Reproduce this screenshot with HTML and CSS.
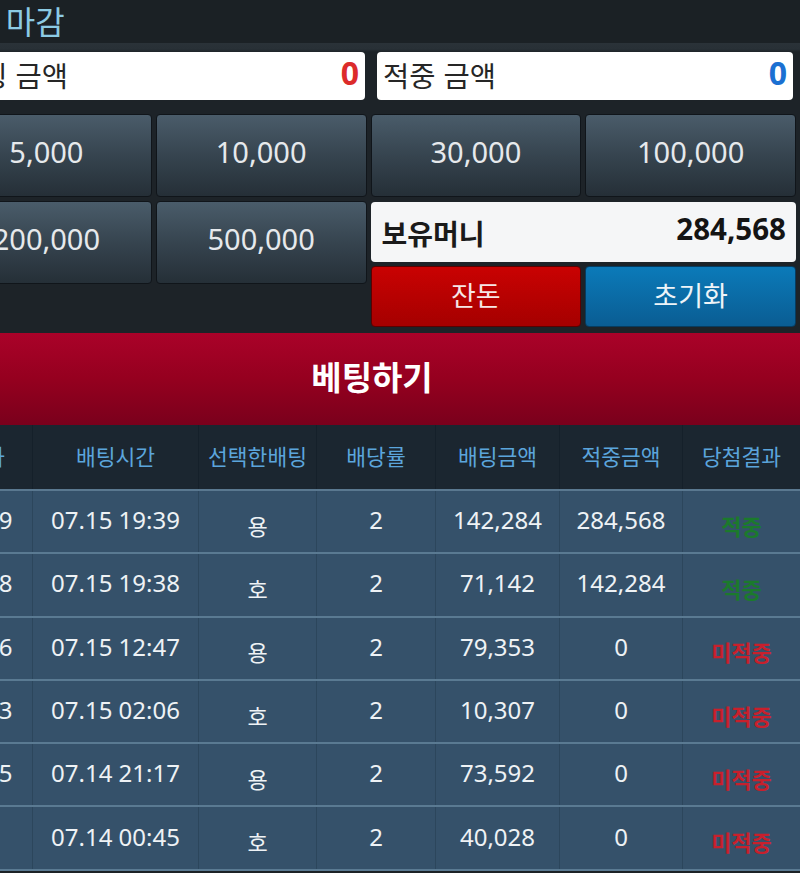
FILE: index.html
```html
<!DOCTYPE html>
<html lang="ko">
<head>
<meta charset="utf-8">
<title>베팅</title>
<link rel="stylesheet" href="styles.css">
</head>
<body>
<div class="page">
  <div class="topbar"><span class="title">회차 마감</span></div>
  <div class="panel">
    <div class="sums">
      <div class="sum"><span class="sum-label">베팅 금액</span><span class="sum-value red">0</span></div>
      <div class="sum"><span class="sum-label">적중 금액</span><span class="sum-value blue">0</span></div>
    </div>
    <div class="controls">
      <div class="chips-left">
        <button class="chip">5,000</button>
        <button class="chip">10,000</button>
        <button class="chip">200,000</button>
        <button class="chip">500,000</button>
      </div>
      <div class="chips-right">
        <button class="chip">30,000</button>
        <button class="chip">100,000</button>
        <div class="wallet"><span class="wallet-label">보유머니</span><span class="wallet-value">284,568</span></div>
        <button class="action change">잔돈</button>
        <button class="action reset">초기화</button>
      </div>
    </div>
  </div>
  <button class="bet">베팅하기</button>
  <div class="history">
    <div class="hrow head">
      <div class="cell">회차</div>
      <div class="cell">배팅시간</div>
      <div class="cell">선택한배팅</div>
      <div class="cell">배당률</div>
      <div class="cell">배팅금액</div>
      <div class="cell">적중금액</div>
      <div class="cell">당첨결과</div>
    </div>
    <div class="hrow">
      <div class="cell">1179</div><div class="cell">07.15 19:39</div><div class="cell kor">용</div><div class="cell">2</div><div class="cell">142,284</div><div class="cell">284,568</div><div class="cell res win">적중</div>
    </div>
    <div class="hrow">
      <div class="cell">1178</div><div class="cell">07.15 19:38</div><div class="cell kor">호</div><div class="cell">2</div><div class="cell">71,142</div><div class="cell">142,284</div><div class="cell res win">적중</div>
    </div>
    <div class="hrow">
      <div class="cell">1136</div><div class="cell">07.15 12:47</div><div class="cell kor">용</div><div class="cell">2</div><div class="cell">79,353</div><div class="cell">0</div><div class="cell res lose">미적중</div>
    </div>
    <div class="hrow">
      <div class="cell">1123</div><div class="cell">07.15 02:06</div><div class="cell kor">호</div><div class="cell">2</div><div class="cell">10,307</div><div class="cell">0</div><div class="cell res lose">미적중</div>
    </div>
    <div class="hrow">
      <div class="cell">1115</div><div class="cell">07.14 21:17</div><div class="cell kor">용</div><div class="cell">2</div><div class="cell">73,592</div><div class="cell">0</div><div class="cell res lose">미적중</div>
    </div>
    <div class="hrow">
      <div class="cell">4</div><div class="cell">07.14 00:45</div><div class="cell kor">호</div><div class="cell">2</div><div class="cell">40,028</div><div class="cell">0</div><div class="cell res lose">미적중</div>
    </div>
  </div>
</div>
</body>
</html>
```
FILE: styles.css
```css
html, body {
  margin: 0;
  padding: 0;
  background: #1c2226;
  overflow: hidden;
}
body {
  font-family: "Noto Sans", "Noto Sans CJK KR", sans-serif;
  width: 800px;
  height: 873px;
}
.page {
  width: 862px;
  margin-left: -62px;
}
.topbar {
  height: 43px;
  background: #1b2125;
  display: flex;
  align-items: center;
  padding-left: 0;
}
.title {
  font-family: "Noto Sans CJK KR", sans-serif;
  font-size: 32px;
  color: #8ccbe4;
  line-height: 1;
  margin-top: -4px;
}
.panel {
  background: linear-gradient(#2a3238 0, #283036 6px, #1d2328 9px, #1d2328 100%);
  padding: 9px 0 6px 0;
}
.sums {
  display: flex;
  gap: 12px;
  padding: 0 7px 0 11px;
}
.sum {
  flex: 1;
  height: 48px;
  background: #ffffff;
  border-radius: 4px;
  display: flex;
  align-items: center;
  justify-content: space-between;
  padding: 0 6px 0 6px;
  box-sizing: border-box;
}
.sum-label {
  font-family: "Noto Sans CJK KR", sans-serif;
  font-size: 28.5px;
  color: #262626;
  line-height: 1;
  margin-top: -2px;
}
.sum-value {
  font-size: 32px;
  font-weight: 700;
  line-height: 1;
  margin-top: -6px;
}
.red { color: #dc2b2b; }
.blue { color: #1b70d2; }
.controls {
  display: flex;
  gap: 4px;
  padding: 14px 4px 0 3px;
}
.chips-left, .chips-right {
  flex: 1;
  display: grid;
  grid-template-columns: 1fr 1fr;
  column-gap: 4px;
  row-gap: 4px;
  align-content: start;
}
.chips-left { grid-template-rows: 83px 83px; }
.chips-right { grid-template-rows: 83px 60px 61px; row-gap: 4.5px; }
button {
  font-family: inherit;
  margin: 0;
  cursor: pointer;
}
.chip {
  background: linear-gradient(#4a5c6a, #36444f 50%, #252f37);
  border: 1px solid #10151a;
  border-radius: 4px;
  color: #e6e9ec;
  font-size: 29px;
  padding: 0 0 9px 0;
}
.wallet {
  grid-column: 1 / 3;
  background: #f5f6f7;
  border-radius: 4px;
  display: flex;
  align-items: center;
  justify-content: space-between;
  padding: 0 10px 0 11px;
}
.wallet-label {
  font-family: "Noto Sans CJK KR", sans-serif;
  font-size: 28px;
  font-weight: 700;
  color: #1a1a1a;
  margin-top: 2px;
}
.wallet-value {
  font-size: 29.5px;
  font-weight: 700;
  color: #141414;
  margin-top: -6px;
}
.action {
  border-radius: 4px;
  font-family: "Noto Sans CJK KR", sans-serif;
  font-size: 27px;
  padding: 0 0 4px 0;
}
.change {
  background: linear-gradient(#c90202, #a50000);
  border: 1px solid #5c0000;
  color: #f6e6e6;
}
.reset {
  background: linear-gradient(#0b7ab9, #0a5d93);
  border: 1px solid #063c60;
  color: #eef4f8;
}
.bet {
  display: block;
  width: 100%;
  height: 92px;
  border: 0;
  background: linear-gradient(#aa0229, #95001f 50%, #7a001c);
  color: #ffffff;
  font-family: "Noto Sans CJK KR", sans-serif;
  font-size: 33px;
  font-weight: 700;
  padding: 0 0 6px 6px;
}
.history {
  background: #35516a;
}
.hrow {
  display: grid;
  grid-template-columns: 95px 166px 118px 119px 124px 123px 117px;
  height: 63.3px;
  box-sizing: border-box;
  border-bottom: 2px solid #5a7a92;
}
.hrow.head {
  height: 66px;
  background: #1b2630;
  border-bottom: 2px solid #5a7890;
}
.cell {
  display: flex;
  align-items: center;
  justify-content: center;
  border-right: 1px solid #2c465c;
  color: #eef2f5;
  font-size: 24px;
  padding-bottom: 4px;
}
.head .cell {
  border-right: 1px solid #15202a;
  font-family: "Noto Sans CJK KR", sans-serif;
  font-size: 21.5px;
  color: #5ba5dc;
  padding-bottom: 4px;
}
.cell:last-child { border-right: 0; }
.kor {
  font-family: "Noto Sans CJK KR", sans-serif;
  font-size: 22px;
  padding-bottom: 0;
  padding-top: 6px;
}
.res {
  font-family: "Noto Sans CJK KR", sans-serif;
  font-size: 22px;
  font-weight: 700;
  padding-bottom: 0;
  padding-top: 6px;
}
.win { color: #1b7a2c; }
.lose { color: #c8202c; }
```
